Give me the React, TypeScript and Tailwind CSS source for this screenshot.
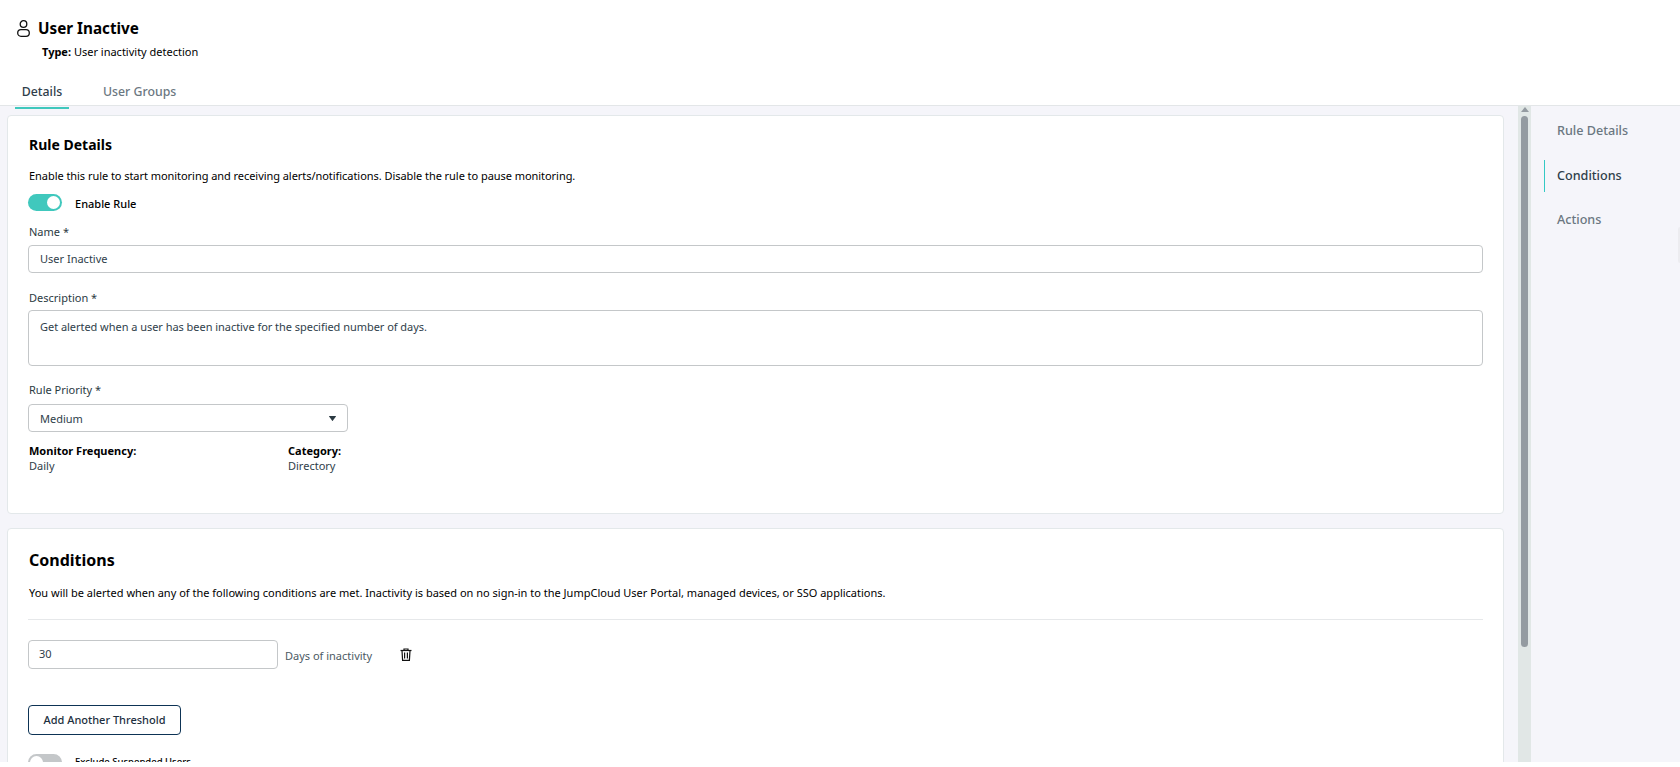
import React from "react";

const font = { fontFamily: '"Noto Sans", "Open Sans", sans-serif' };

const Label = ({ children }: any) => (
  <label className="block pl-[1px] text-[11px] leading-4 text-[#2b3a42]">{children}</label>
);

const UserIcon = () => (
  <svg width="13" height="17" viewBox="0 0 13 17" fill="none" stroke="#111" strokeWidth="1.3">
    <circle cx="6.5" cy="4" r="3.3" />
    <rect x="0.7" y="9.6" width="11.6" height="6.7" rx="3.3" />
  </svg>
);

const TrashIcon = () => (
  <svg width="12" height="13" viewBox="0 0 12 13" fill="none" stroke="#111" strokeWidth="1.2">
    <path d="M0.5 2.5h11" />
    <path d="M4 2.5V1h4v1.5" />
    <path d="M2 2.5l.6 9.8h6.8l.6-9.8" />
    <path d="M4.6 4.5v6M7.4 4.5v6" />
  </svg>
);

const App = () => {
  return (
    <div className="flex h-[767px] w-[1680px] flex-col overflow-hidden bg-white text-black" style={font}>
      <header className="h-[105px] shrink-0 bg-white">
        <div className="flex items-center gap-[8px] pl-[17px] pt-[19px]">
          <UserIcon />
          <h1 className="mt-[1px] text-[15.25px] font-bold leading-[17px]">User Inactive</h1>
        </div>
        <p className="mt-[7px] pl-[42px] text-[11px] leading-4">
          <b className="font-bold">Type:</b> User inactivity detection
        </p>
        <nav className="relative z-10 mt-[22px] flex pl-[15px] text-[12.3px] font-medium">
          <a className="h-[27px] w-[54px] border-b-2 border-[#40c8bd] text-center leading-5 text-[#2f3e4a]">Details</a>
          <a className="ml-[34px] leading-5 text-[#6b7781]">User Groups</a>
        </nav>
      </header>
      <div className="flex h-[657px] shrink-0 border-t border-[#e3e6e8] bg-[#f5f5fa]">
        <main className="w-[1518px] shrink-0 overflow-hidden pl-[7px] pr-[14px] pt-[9px]">
          <section className="h-[399px] rounded border border-[#e3e8ea] bg-white px-5 pt-[19px]">
            <h2 className="pl-[1px] text-sm font-bold leading-5">Rule Details</h2>
            <p className="mt-[13px] pl-[1px] text-[11px] leading-4 tracking-[-0.05px]">
              Enable this rule to start monitoring and receiving alerts/notifications. Disable the rule to pause monitoring.
            </p>
            <div className="mt-[10px] flex h-[17px] items-center gap-[13px]">
              <span className="flex h-[17px] w-[34px] items-center justify-end rounded-full bg-[#40c8bd] pr-[2px]">
                <span className="size-[13px] rounded-full bg-white" />
              </span>
              <span className="mt-[2px] text-[11px] leading-[15px] font-medium">Enable Rule</span>
            </div>
            <div className="mt-[13px]">
              <Label>Name *</Label>
              <div className="mt-[5px] flex h-[28px] items-center rounded border border-[#c4c7c9] pl-[11px] pt-[1px] text-[11px] text-[#2f3e4a]">
                User Inactive
              </div>
            </div>
            <div className="mt-[17px]">
              <Label>Description *</Label>
              <div className="mt-[4px] h-[56px] rounded border border-[#c4c7c9] pl-[11px] pt-[8px] text-[11px] leading-4 tracking-[-0.04px] text-[#2f3e4a]">
                Get alerted when a user has been inactive for the specified number of days.
              </div>
            </div>
            <div className="mt-[16px]">
              <Label>Rule Priority *</Label>
              <div className="mt-[6px] flex h-[28px] w-[320px] items-center justify-between rounded border border-[#c4c7c9] px-[11px] text-[11px] text-[#2f3e4a]">
                <span className="mt-[3px]">Medium</span>
                <svg width="7" height="5" viewBox="0 0 7 5" fill="#2b3a42">
                  <path d="M0.4 0h6.2a.4.4 0 0 1 .3.6L3.8 4.8a.4.4 0 0 1-.6 0L.1.6A.4.4 0 0 1 .4 0z" />
                </svg>
              </div>
            </div>
            <div className="mt-[11px] flex text-[11px] leading-[15px]">
              <div className="w-[260px] pl-[1px]">
                <div className="font-bold">Monitor Frequency:</div>
                <div className="text-[#2f3e4a]">Daily</div>
              </div>
              <div>
                <div className="font-bold">Category:</div>
                <div className="text-[#2f3e4a]">Directory</div>
              </div>
            </div>
          </section>
          <section className="mt-[14px] h-[300px] rounded border border-[#e3e8ea] bg-white px-5 pt-[21px]">
            <h2 className="pl-[1px] text-base font-bold leading-5">Conditions</h2>
            <p className="mt-[15px] pl-[1px] text-[11px] leading-4">
              You will be alerted when any of the following conditions are met. Inactivity is based on no sign-in to the JumpCloud User Portal, managed devices, or SSO applications.
            </p>
            <div className="mt-[18px] border-t border-[#e6e8ea]" />
            <div className="mt-[20px] flex items-center">
              <div className="flex h-[29px] w-[250px] items-center rounded border border-[#c4c7c9] pl-[10px] text-[11px] text-[#2f3e4a]">30</div>
              <span className="ml-[7px] mt-[3px] text-[11px] text-[#4c5a64]">Days of inactivity</span>
              <span className="ml-[28px]"><TrashIcon /></span>
            </div>
            <button className="mt-[36px] flex h-[30px] w-[153px] items-center justify-center rounded border border-[#0d3355] text-[11px] font-medium text-[#1d2f40]">
              Add Another Threshold
            </button>
            <div className="mt-[19px] flex items-center gap-[13px]">
              <span className="flex h-[17px] w-[34px] items-center rounded-full bg-[#c4c7c9] pl-[2px]">
                <span className="size-[13px] rounded-full bg-white" />
              </span>
              <span className="text-[9.5px] font-medium">Exclude Suspended Users</span>
            </div>
          </section>
        </main>
        <div className="flex h-full w-[13px] shrink-0 flex-col items-center bg-[#e1e7e6]">
          <svg className="mt-[1px] shrink-0" width="8" height="5" viewBox="0 0 8 5" fill="#949ba1">
            <path d="M4 0l4 5H0z" />
          </svg>
          <div className="mt-[4px] h-[531px] w-[7px] shrink-0 rounded-full bg-[#949ba1]" />
        </div>
        <aside className="relative flex-1 pt-[15px] text-[12.6px] font-medium leading-5 text-[#6b7781]">
          <div className="pl-[26px]">Rule Details</div>
          <div className="ml-[13px] mt-[19px] flex h-[32px] items-center border-l border-[#33c9c4] pl-[12px] text-[#2f3e4a]">Conditions</div>
          <div className="mt-[18px] pl-[26px]">Actions</div>
          <div className="absolute right-0 top-[121px] h-[36px] w-[2px] rounded-l bg-[#ececf0]" />
        </aside>
      </div>
      <div className="flex-1 bg-white" />
    </div>
  );
};

export default App;
